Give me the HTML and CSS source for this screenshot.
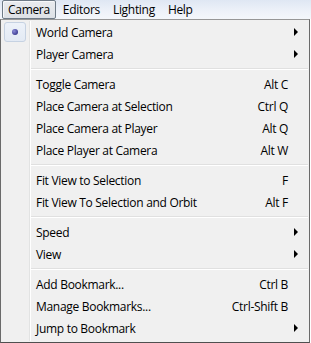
FILE: index.html
```html
<!DOCTYPE html>
<html lang="en">
<head>
  <meta charset="UTF-8">
  <title>Camera menu</title>
  <link rel="stylesheet" href="styles.css">
</head>
<body>
  <div class="menubar">
    <span class="top-item open">Camera</span>
    <span class="top-item">Editors</span>
    <span class="top-item">Lighting</span>
    <span class="top-item">Help</span>
  </div>

  <div class="dropdown">
    <div class="item">
      <span class="check"><span class="dot"></span></span>
      <span class="label">World Camera</span>
      <span class="arrow"></span>
    </div>
    <div class="item">
      <span class="check"></span>
      <span class="label">Player Camera</span>
      <span class="arrow"></span>
    </div>
    <div class="sep"></div>

    <div class="item"><span class="check"></span><span class="label">Toggle Camera</span><span class="key">Alt C</span></div>
    <div class="item"><span class="check"></span><span class="label">Place Camera at Selection</span><span class="key">Ctrl Q</span></div>
    <div class="item"><span class="check"></span><span class="label">Place Camera at Player</span><span class="key">Alt Q</span></div>
    <div class="item"><span class="check"></span><span class="label">Place Player at Camera</span><span class="key">Alt W</span></div>
    <div class="sep"></div>

    <div class="item"><span class="check"></span><span class="label">Fit View to Selection</span><span class="key">F</span></div>
    <div class="item"><span class="check"></span><span class="label">Fit View To Selection and Orbit</span><span class="key">Alt F</span></div>
    <div class="sep"></div>

    <div class="item"><span class="check"></span><span class="label">Speed</span><span class="arrow"></span></div>
    <div class="item"><span class="check"></span><span class="label">View</span><span class="arrow"></span></div>
    <div class="sep"></div>

    <div class="item"><span class="check"></span><span class="label">Add Bookmark...</span><span class="key">Ctrl B</span></div>
    <div class="item"><span class="check"></span><span class="label">Manage Bookmarks...</span><span class="key">Ctrl-Shift B</span></div>
    <div class="item"><span class="check"></span><span class="label">Jump to Bookmark</span><span class="arrow"></span></div>
  </div>
</body>
</html>
```

FILE: styles.css
```css
body {
  margin: 0;
  background: #ffffff;
  font-family: "Open Sans", "Noto Sans", sans-serif;
  font-size: 12px;
  letter-spacing: -0.3px;
  color: #000;
  width: 311px;
  height: 343px;
  overflow: hidden;
}

/* top menu strip */
.menubar {
  height: 19px;
  display: flex;
  align-items: center;
  padding-left: 2px;
  background: linear-gradient(#dfe7f3, #eef2f9 60%, #f4f7fb);
}
.top-item {
  padding: 0 5px;
  margin-right: 1px;
  height: 17px;
  line-height: 17px;
  border: 1px solid transparent;
  border-radius: 2px;
}
.top-item.open {
  border-color: #6f7b87;
  background: linear-gradient(#e9ebee, #dde1e6);
  box-shadow: inset 1px 1px 0 #f7f8fa;
}

/* the drop down */
.dropdown {
  width: 306px;
  height: 320px;
  border: 1px solid #979797;
  border-left-color: #6a6a6a;
  border-bottom-color: #4f4f4f;
  border-right-color: #6a6a6a;
  padding: 1px;
  background: #f0f0f0;
  position: relative;
}
.dropdown::before {
  content: "";
  position: absolute;
  left: 28px;
  top: 1px;
  bottom: 1px;
  width: 1px;
  background: #e2e3e3;
  border-right: 1px solid #ffffff;
}

.item {
  display: flex;
  align-items: center;
  height: 22px;
}
.check {
  width: 22px;
  height: 20px;
  margin: 0 9px 0 2px;
  box-sizing: border-box;
  display: flex;
  align-items: center;
  justify-content: center;
}
.item:first-child .check {
  border: 1px solid #c6d2e2;
  border-radius: 3px;
  background: linear-gradient(#edf2f9, #e3eaf4);
}
.dot {
  width: 6px;
  height: 6px;
  border-radius: 50%;
  background: radial-gradient(circle at 35% 35%, #8c8cd8, #1f1f78);
}
.label {
  flex: 1;
  padding-left: 1px;
  white-space: nowrap;
}
.key {
  padding-right: 20px;
}
.arrow {
  width: 0;
  height: 0;
  margin-right: 10px;
  border-top: 4px solid transparent;
  border-bottom: 4px solid transparent;
  border-left: 4px solid #000;
}

.sep {
  height: 8px;
  margin-left: 29px;
  position: relative;
}
.sep::after {
  content: "";
  position: absolute;
  left: 0;
  right: 0;
  top: 3px;
  height: 1px;
  background: #e0e0e0;
  border-bottom: 1px solid #ffffff;
}
```
